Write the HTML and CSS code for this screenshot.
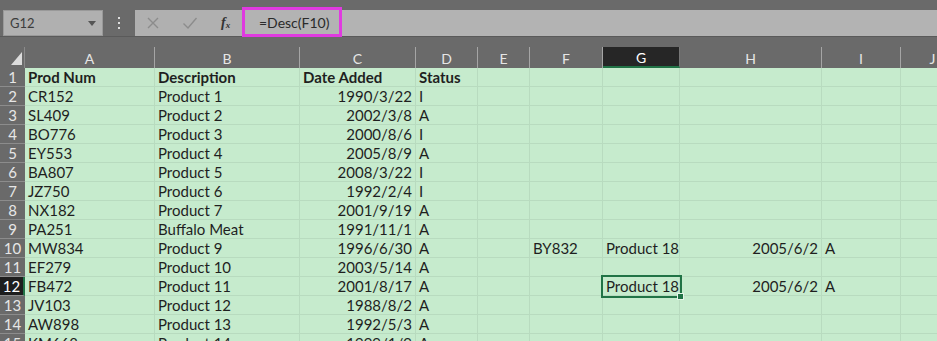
FILE: index.html
```html
<!DOCTYPE html>
<html>
<head>
<meta charset="utf-8">
<link rel="stylesheet" href="styles.css">
</head>
<body>
<div class="app">
  <div class="toolbar">
    <div class="namebox"><span>G12</span><svg class="caret" width="8" height="5" viewBox="0 0 8 5"><path d="M0 0h8L4 5z" fill="#555"/></svg></div>
    <div class="grip"><i></i><i></i><i></i></div>
    <div class="fbtns">
      <svg class="btn" width="14" height="14" viewBox="0 0 14 14"><path d="M2 2l10 10M12 2L2 12" stroke="#8c8c8c" stroke-width="1.4" fill="none"/></svg>
      <svg class="btn" width="16" height="14" viewBox="0 0 16 14"><path d="M1.5 7.5l4.5 4.5L14.5 2" stroke="#8c8c8c" stroke-width="1.4" fill="none"/></svg>
      <span class="fx">f<sub>x</sub></span>
    </div>
    <div class="formula"><span class="hl">=Desc(F10)</span></div>
  </div>
  <div class="sheet">
    <div class="corner"><span class="tri"></span></div>
    <div class="ch">A</div><div class="ch">B</div><div class="ch">C</div><div class="ch">D</div><div class="ch">E</div><div class="ch">F</div><div class="ch sel">G</div><div class="ch">H</div><div class="ch">I</div><div class="ch">J</div>

    <div class="rh">1</div><div class="c b">Prod Num</div><div class="c b">Description</div><div class="c b">Date Added</div><div class="c b">Status</div><div class="c"></div><div class="c"></div><div class="c"></div><div class="c"></div><div class="c"></div><div class="c"></div>
    <div class="rh">2</div><div class="c">CR152</div><div class="c">Product 1</div><div class="c r">1990/3/22</div><div class="c">I</div><div class="c"></div><div class="c"></div><div class="c"></div><div class="c"></div><div class="c"></div><div class="c"></div>
    <div class="rh">3</div><div class="c">SL409</div><div class="c">Product 2</div><div class="c r">2002/3/8</div><div class="c">A</div><div class="c"></div><div class="c"></div><div class="c"></div><div class="c"></div><div class="c"></div><div class="c"></div>
    <div class="rh">4</div><div class="c">BO776</div><div class="c">Product 3</div><div class="c r">2000/8/6</div><div class="c">I</div><div class="c"></div><div class="c"></div><div class="c"></div><div class="c"></div><div class="c"></div><div class="c"></div>
    <div class="rh">5</div><div class="c">EY553</div><div class="c">Product 4</div><div class="c r">2005/8/9</div><div class="c">A</div><div class="c"></div><div class="c"></div><div class="c"></div><div class="c"></div><div class="c"></div><div class="c"></div>
    <div class="rh">6</div><div class="c">BA807</div><div class="c">Product 5</div><div class="c r">2008/3/22</div><div class="c">I</div><div class="c"></div><div class="c"></div><div class="c"></div><div class="c"></div><div class="c"></div><div class="c"></div>
    <div class="rh">7</div><div class="c">JZ750</div><div class="c">Product 6</div><div class="c r">1992/2/4</div><div class="c">I</div><div class="c"></div><div class="c"></div><div class="c"></div><div class="c"></div><div class="c"></div><div class="c"></div>
    <div class="rh">8</div><div class="c">NX182</div><div class="c">Product 7</div><div class="c r">2001/9/19</div><div class="c">A</div><div class="c"></div><div class="c"></div><div class="c"></div><div class="c"></div><div class="c"></div><div class="c"></div>
    <div class="rh">9</div><div class="c">PA251</div><div class="c">Buffalo Meat</div><div class="c r">1991/11/1</div><div class="c">A</div><div class="c"></div><div class="c"></div><div class="c"></div><div class="c"></div><div class="c"></div><div class="c"></div>
    <div class="rh">10</div><div class="c">MW834</div><div class="c">Product 9</div><div class="c r">1996/6/30</div><div class="c">A</div><div class="c"></div><div class="c">BY832</div><div class="c">Product 18</div><div class="c r">2005/6/2</div><div class="c">A</div><div class="c"></div>
    <div class="rh">11</div><div class="c">EF279</div><div class="c">Product 10</div><div class="c r">2003/5/14</div><div class="c">A</div><div class="c"></div><div class="c"></div><div class="c"></div><div class="c"></div><div class="c"></div><div class="c"></div>
    <div class="rh sel">12</div><div class="c">FB472</div><div class="c">Product 11</div><div class="c r">2001/8/17</div><div class="c">A</div><div class="c"></div><div class="c"></div><div class="c active">Product 18<span class="handle"></span></div><div class="c r">2005/6/2</div><div class="c">A</div><div class="c"></div>
    <div class="rh">13</div><div class="c">JV103</div><div class="c">Product 12</div><div class="c r">1988/8/2</div><div class="c">A</div><div class="c"></div><div class="c"></div><div class="c"></div><div class="c"></div><div class="c"></div><div class="c"></div>
    <div class="rh">14</div><div class="c">AW898</div><div class="c">Product 13</div><div class="c r">1992/5/3</div><div class="c">A</div><div class="c"></div><div class="c"></div><div class="c"></div><div class="c"></div><div class="c"></div><div class="c"></div>
    <div class="rh">15</div><div class="c">KM668</div><div class="c">Product 14</div><div class="c r">1999/1/9</div><div class="c">A</div><div class="c"></div><div class="c"></div><div class="c"></div><div class="c"></div><div class="c"></div><div class="c"></div>
  </div>
</div>
</body>
</html>
```

FILE: styles.css
```css
html, body {
  margin: 0;
  padding: 0;
  background: #6a6a6a;
  overflow: hidden;
}
.app {
  width: 937px;
  height: 341px;
  overflow: hidden;
  font-family: "Lato", "Liberation Sans", sans-serif;
}
.toolbar {
  height: 37px;
  box-sizing: border-box;
  padding-top: 10px;
  display: flex;
  align-items: flex-start;
  border-bottom: 1px solid #5a5a5a;
  margin-bottom: 10px;
}
.namebox {
  margin-left: 3px;
  width: 100px;
  height: 26px;
  box-sizing: border-box;
  background: #b0b0b0;
  border: 1px solid #999;
  display: flex;
  align-items: center;
  justify-content: space-between;
  padding: 0 6px 0 6px;
  font-size: 13px;
  color: #3c3c3c;
}
.grip {
  width: 32px;
  height: 26px;
  display: flex;
  flex-direction: column;
  align-items: center;
  justify-content: center;
  gap: 3px;
}
.grip i {
  display: block;
  width: 2px;
  height: 2px;
  background: #ddd;
}
.fbtns {
  width: 108px;
  height: 26px;
  box-sizing: border-box;
  background: #b0b0b0;
  display: flex;
  align-items: center;
  padding-left: 11px;
  gap: 0;
}
.btn { margin-right: 22px; }
.fbtns .btn:nth-child(2) { margin-right: 23px; }
.fx {
  font-family: "Liberation Serif", serif;
  font-style: italic;
  font-weight: bold;
  font-size: 14px;
  color: #333;
}
.fx sub { font-size: 9px; vertical-align: -1px; }
.formula {
  flex: 1;
  height: 26px;
  background: #b3b3b3;
  position: relative;
}
.hl {
  position: absolute;
  left: -1px;
  top: -3px;
  width: 100px;
  height: 30px;
  box-sizing: border-box;
  border: 3px solid #e03ae0;
  padding-left: 14px;
  display: flex;
  align-items: center;
  font-size: 14px;
  color: #2a2a2a;
}
.sheet {
  display: grid;
  grid-template-columns: 25px 130px 145px 116px 62px 52px 73px 77px 142px 79px 64px;
  grid-template-rows: 21px;
  grid-auto-rows: 19px;
  width: 965px;
}
.corner {
  position: relative;
  border-right: 1px solid #8a8a8a;
}
.tri {
  position: absolute;
  right: 2px;
  bottom: 3px;
  width: 0;
  height: 0;
  border-left: 11px solid transparent;
  border-bottom: 13px solid #dcdcdc;
}
.ch {
  box-sizing: border-box;
  border-right: 1px solid #a5a5a5;
  color: #e6e6e6;
  font-size: 14px;
  display: flex;
  align-items: center;
  justify-content: center;
  padding-top: 2px;
}
.ch.sel {
  background: #262626;
  border-bottom: 2px solid #217346;
  color: #fff;
  border-right-color: #777;
}
.rh {
  box-sizing: border-box;
  border-bottom: 1px solid #8c8c8c;
  color: #e6e6e6;
  font-size: 15px;
  display: flex;
  align-items: center;
  justify-content: center;
}
.rh.sel {
  background: #1e1e1e;
  color: #fff;
  border-right: 2px solid #217346;
}
.c {
  box-sizing: border-box;
  background: #c6ebcd;
  border-right: 1px solid #b8dbbf;
  border-bottom: 1px solid #b8dbbf;
  padding: 0 3px;
  font-size: 15px;
  color: #1f1f1f;
  white-space: nowrap;
  display: flex;
  align-items: center;
  overflow: visible;
}
.c.r { justify-content: flex-end; padding-right: 3px; }
.c.b { font-weight: bold; }
.c.active {
  position: relative;
  outline: 2px solid #217346;
  outline-offset: 0;
  z-index: 2;
}
.handle {
  position: absolute;
  right: -5px;
  bottom: -5px;
  width: 5px;
  height: 5px;
  background: #217346;
  border: 1px solid #e8f4ea;
}
```
